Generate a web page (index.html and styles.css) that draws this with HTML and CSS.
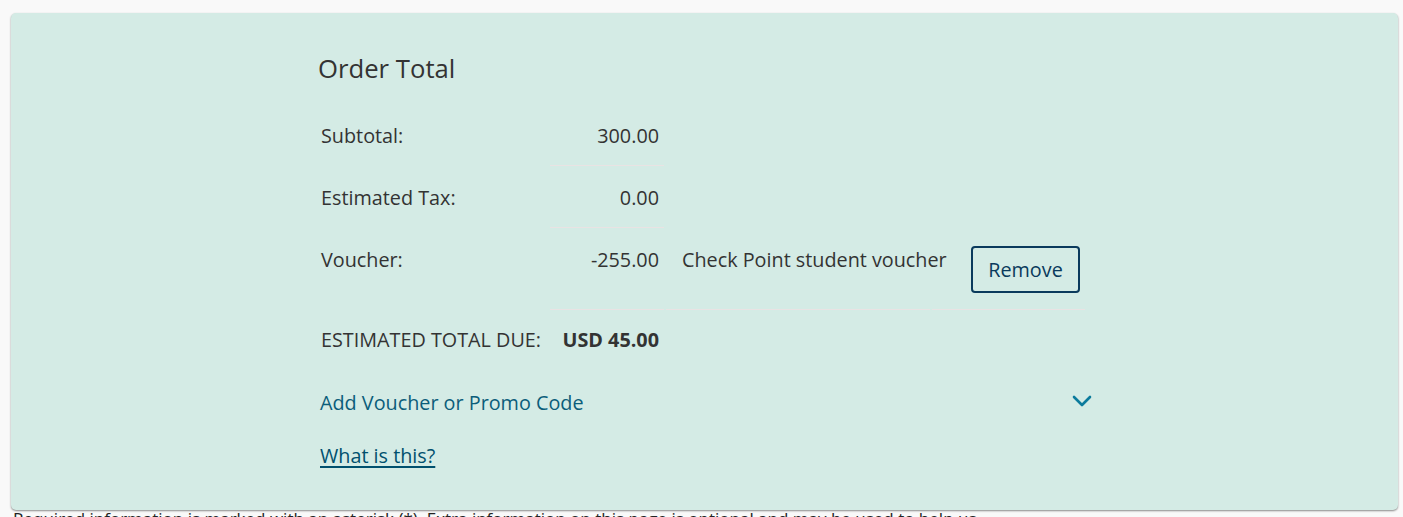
FILE: index.html
```html
<!DOCTYPE html>
<html lang="en">
<head>
    <meta charset="UTF-8">
    <meta name="viewport" content="width=device-width, initial-scale=1.0">
    <title>Order Total</title>
    <link rel="stylesheet" href="styles.css">
</head>
<body>
    <div class="card">
        <div class="summary">
            <h2 class="title">Order Total</h2>

            <table class="totals">
                <colgroup>
                    <col class="col-label">
                    <col class="col-amount">
                    <col class="col-desc">
                    <col class="col-action">
                </colgroup>
                <tr>
                    <td class="label">Subtotal:</td>
                    <td class="amount">300.00</td>
                    <td></td>
                    <td></td>
                </tr>
                <tr>
                    <td class="label">Estimated Tax:</td>
                    <td class="amount">0.00</td>
                    <td></td>
                    <td></td>
                </tr>
                <tr class="voucher">
                    <td class="label">Voucher:</td>
                    <td class="amount">-255.00</td>
                    <td class="desc">Check Point student voucher</td>
                    <td class="action"><button class="remove">Remove</button></td>
                </tr>
                <tr class="total">
                    <td class="label">ESTIMATED TOTAL DUE:</td>
                    <td class="amount">USD 45.00</td>
                    <td></td>
                    <td></td>
                </tr>
            </table>

            <div class="promo">
                <span>Add Voucher or Promo Code</span>
                <svg class="chevron" width="20" height="12" viewBox="0 0 20 12">
                    <polyline points="2,2 10,10 18,2" fill="none" stroke="#0b7b9c" stroke-width="2.6" stroke-linecap="round" stroke-linejoin="round"/>
                </svg>
            </div>

            <a class="help" href="#">What is this?</a>
        </div>
    </div>

    <p class="note">Required information is marked with an asterisk (*). Extra information on this page is optional and may be used to help us.</p>
</body>
</html>
```

FILE: styles.css
```css
* {
    box-sizing: border-box;
}
body {
    font-family: "Open Sans", "Noto Sans", Arial, sans-serif;
    margin: 0;
    padding: 13px 5px 0 11px;
    background-color: #f9f9f9;
    color: #333;
}
.card {
    background-color: #d4ebe5;
    border-radius: 5px;
    box-shadow: 0 1px 2px rgba(0, 0, 0, 0.45);
    padding: 40px 0 41px;
}
.summary {
    width: 775px;
    margin: 0 auto;
}
.title {
    font-size: 25.7px;
    font-weight: 400;
    line-height: 32px;
    margin: 0 0 19px 1px;
}
.totals {
    table-layout: fixed;
    width: 772px;
    border-collapse: separate;
    border-spacing: 2px 0;
    margin-left: -2px;
    font-size: 19.8px;
    line-height: 27px;
}
.col-label {
    width: 231px;
}
.col-amount {
    width: 114px;
}
.col-desc {
    width: 264px;
}
.col-action {
    width: 153px;
}
.totals td {
    padding: 18px 0 16px;
    vertical-align: top;
    border-bottom: 1px solid transparent;
}
.totals .label {
    padding-left: 4px;
}
.totals .amount {
    text-align: right;
    padding-right: 5px;
    border-bottom-color: #e9e3e3;
    white-space: nowrap;
}
.totals .voucher td:not(.label) {
    border-bottom-color: #e9e3e3;
}
.totals .desc {
    padding-left: 16px;
    white-space: nowrap;
}
.totals .action {
    padding-left: 39px;
}
.totals .total td {
    padding-top: 16px;
}
.totals .total .amount {
    font-weight: 700;
    border-bottom-color: transparent;
}
.remove {
    font-family: inherit;
    font-size: 19.8px;
    line-height: 27px;
    color: #0a3a5c;
    background: transparent;
    border: 2px solid #0a3a5c;
    border-radius: 4px;
    padding: 8px 0;
    width: 109px;
    cursor: pointer;
}
.promo {
    display: flex;
    justify-content: space-between;
    align-items: center;
    margin-top: 19px;
    padding: 0 0 0 3px;
    font-size: 19.8px;
    line-height: 27px;
    color: #0b5d7a;
}
.chevron {
    margin-top: -4px;
}
.help {
    display: inline-block;
    margin: 26px 0 0 3px;
    font-size: 19.8px;
    line-height: 27px;
    color: #00506e;
    text-decoration-thickness: 2px;
    text-underline-offset: 3px;
}
.note {
    margin: 1px 0 0 2px;
    font-size: 17px;
    line-height: 16px;
    color: #222;
    white-space: nowrap;
}
```
